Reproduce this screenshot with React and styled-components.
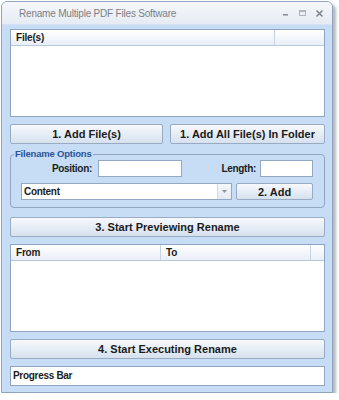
import React from "react";
import styled, { createGlobalStyle } from "styled-components";

const Global = createGlobalStyle`
  body {
    margin: 0;
    background: #ffffff;
    font-family: "Liberation Sans", Arial, sans-serif;
  }
`;

const Window = styled.div`
  margin: 1px 0 0 1px;
  width: 330px;
  height: 390px;
  border: 1px solid #8ea4c1;
  border-radius: 6px 6px 0 0;
  background: #c7dcf5;
  box-shadow: 3px 3px 3px rgba(0, 0, 0, 0.28);
  display: flex;
  flex-direction: column;
  overflow: hidden;
`;

const TitleBar = styled.div`
  height: 22px;
  display: flex;
  align-items: center;
  padding: 0 8px 0 17px;
  background: linear-gradient(#f5f7fa, #e6ecf4);
  border-bottom: 1px solid #d3e1f2;
  color: #7b7f86;
  font-size: 10px;
  letter-spacing: -0.2px;
`;

const Title = styled.span`
  flex: 1;
`;

const Controls = styled.div`
  display: flex;
  gap: 8px;
  align-items: center;
`;

const Client = styled.div`
  flex: 1;
  padding: 4px 7px 0 8px;
  display: flex;
  flex-direction: column;
  gap: 7px;
`;

const ListBox = styled.div`
  height: ${(p) => p.$h}px;
  box-sizing: border-box;
  border: 1px solid #8fa6c2;
  background: #ffffff;
`;

const Header = styled.div`
  height: 15px;
  display: grid;
  grid-template-columns: ${(p) => p.$cols};
  background: linear-gradient(#ffffff, #e9eff7);
  border-bottom: 1px solid #b9c8da;
`;

const HeadCell = styled.div`
  font-size: 10px;
  letter-spacing: -0.2px;
  font-weight: bold;
  color: #1c1c1c;
  padding-left: 5px;
  line-height: 15px;
  border-right: ${(p) => (p.$last ? "none" : "1px solid #c7d3e2")};
`;

const Button = styled.button`
  height: ${(p) => p.$h || 20}px;
  box-sizing: border-box;
  width: ${(p) => p.$w || "100%"};
  border: 1px solid #98abc2;
  border-radius: 2px;
  background: linear-gradient(#f7f9fc 0%, #e6edf6 50%, #d6e1ee 100%);
  font-family: "Liberation Sans", Arial, sans-serif;
  font-weight: bold;
  font-size: 11px;
  color: #1b1b1b;
  padding: 0;
`;

const Row = styled.div`
  display: flex;
  gap: 7px;
`;

const Group = styled.fieldset`
  margin: -3px 0 2px 0;
  padding: 0 11px 7px 10px;
  border: 1px solid #8fa6c2;
  border-radius: 4px;
  display: flex;
  flex-direction: column;
  gap: 6px;
`;

const Legend = styled.legend`
  padding: 0 1px;
  margin-left: -7px;
  height: 12px;
  line-height: 12px;
  font-size: 9.5px;
  letter-spacing: -0.2px;
  font-weight: bold;
  color: #2b5595;
`;

const FieldRow = styled.div`
  display: flex;
  align-items: center;
  height: 17px;
`;

const Label = styled.span`
  font-size: 10px;
  letter-spacing: -0.3px;
  font-weight: bold;
  color: #1c1c1c;
  width: ${(p) => p.$w}px;
  text-align: right;
  margin-right: ${(p) => p.$gap}px;
`;

const Input = styled.div`
  width: ${(p) => p.$w}px;
  height: 17px;
  box-sizing: border-box;
  border: 1px solid #93a8c3;
  background: #ffffff;
`;

const Spacer = styled.div`
  flex: 1;
`;

const Combo = styled.div`
  width: 211px;
  height: 17px;
  box-sizing: border-box;
  border: 1px solid #93a8c3;
  background: #ffffff;
  display: flex;
  align-items: center;
  font-size: 10px;
  letter-spacing: -0.3px;
  font-weight: bold;
  color: #1c1c1c;
`;

const ComboText = styled.span`
  flex: 1;
  padding-left: 2px;
`;

const Arrow = styled.div`
  width: 13px;
  height: 15px;
  border-left: 1px solid #d5dde7;
  background: linear-gradient(#f6f8fb, #e4eaf2);
  display: flex;
  align-items: center;
  justify-content: center;
`;

const Progress = styled.div`
  height: 20px;
  box-sizing: border-box;
  border: 1px solid #8fa6c2;
  background: #ffffff;
  font-size: 10px;
  letter-spacing: -0.3px;
  font-weight: bold;
  color: #1c1c1c;
  padding-left: 2px;
  line-height: 18px;
`;

export default function App() {
  return (
    <>
      <Global />
      <Window>
        <TitleBar>
          <Title>Rename Multiple PDF Files Software</Title>
          <Controls>
            <svg width="8" height="8" viewBox="0 0 8 8">
              <rect x="1" y="5" width="5" height="1.6" fill="#8b9099" />
            </svg>
            <svg width="9" height="8" viewBox="0 0 9 8">
              <rect x="1.5" y="1.5" width="6" height="5" fill="none" stroke="#b0b5bc" />
              <rect x="1" y="1" width="7" height="2" fill="#b0b5bc" />
            </svg>
            <svg width="9" height="9" viewBox="0 0 9 9">
              <path d="M1.5 1.5 L7.5 7.5 M7.5 1.5 L1.5 7.5" stroke="#7d838c" strokeWidth="1.5" />
            </svg>
          </Controls>
        </TitleBar>
        <Client>
          <ListBox $h={88}>
            <Header $cols="264px 1fr">
              <HeadCell>File(s)</HeadCell>
              <HeadCell $last />
            </Header>
          </ListBox>
          <Row>
            <Button $w="154px">1. Add File(s)</Button>
            <Button $w="156px">1. Add All File(s) In Folder</Button>
          </Row>
          <Group>
            <Legend>Filename Options</Legend>
            <FieldRow>
              <Label $w={71} $gap={6}>Position:</Label>
              <Input $w={84} />
              <Spacer />
              <Label $w={40} $gap={4}>Length:</Label>
              <Input $w={53} />
            </FieldRow>
            <FieldRow>
              <Combo>
                <ComboText>Content</ComboText>
                <Arrow>
                  <svg width="5" height="3" viewBox="0 0 5 3">
                    <path d="M0 0 L5 0 L2.5 3 Z" fill="#8d939b" />
                  </svg>
                </Arrow>
              </Combo>
              <Spacer />
              <Button $w="77px" $h={17}>2. Add</Button>
            </FieldRow>
          </Group>
          <Button>3. Start Previewing Rename</Button>
          <ListBox $h={88}>
            <Header $cols="150px 150px 1fr">
              <HeadCell>From</HeadCell>
              <HeadCell>To</HeadCell>
              <HeadCell $last />
            </Header>
          </ListBox>
          <Button>4. Start Executing Rename</Button>
          <Progress>Progress Bar</Progress>
        </Client>
      </Window>
    </>
  );
}
